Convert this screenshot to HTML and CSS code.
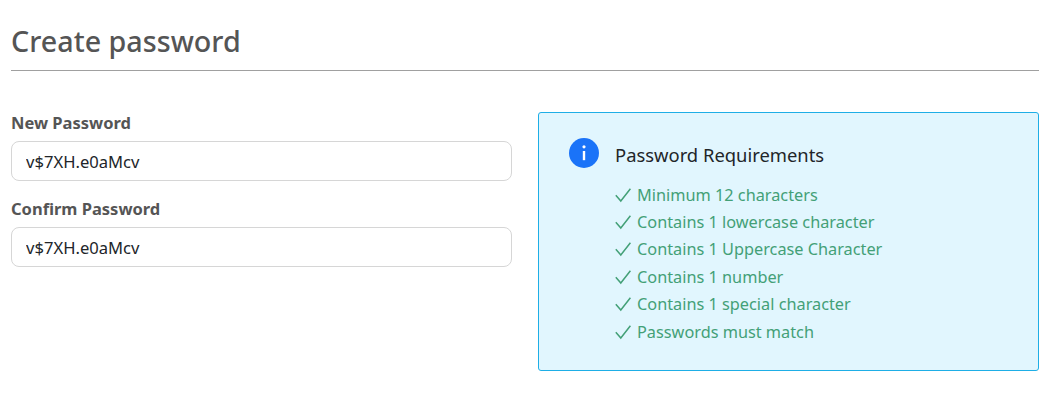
FILE: index.html
```html
<!DOCTYPE html>
<html lang="en">
<head>
<meta charset="utf-8">
<title>Create password</title>
<link rel="stylesheet" href="styles.css">
</head>
<body>
<main class="page">
  <h1 class="title">Create password</h1>
  <div class="columns">
    <form class="fields">
      <label class="label" for="np">New Password</label>
      <input class="input" id="np" type="text" value="v$7XH.e0aMcv">
      <label class="label" for="cp">Confirm Password</label>
      <input class="input" id="cp" type="text" value="v$7XH.e0aMcv">
    </form>
    <section class="req">
      <svg class="info" viewBox="0 0 30 30" width="30" height="30" aria-hidden="true"><circle fill="#1a73f8" cx="15" cy="15" r="15"/><path fill="#fff" d="M13.8 13h2.4v9.2h-2.4z"/><circle fill="#fff" cx="15" cy="8.8" r="1.6"/></svg>
      <div class="req-body">
        <h2 class="req-title">Password Requirements</h2>
        <ul class="list">
          <li class="item"><svg class="check" viewBox="0 0 16 16" width="16" height="16"><path d="M.8 8.2 5.8 14 15.4 1.8"/></svg>Minimum 12 characters</li>
          <li class="item"><svg class="check" viewBox="0 0 16 16" width="16" height="16"><path d="M.8 8.2 5.8 14 15.4 1.8"/></svg>Contains 1 lowercase character</li>
          <li class="item"><svg class="check" viewBox="0 0 16 16" width="16" height="16"><path d="M.8 8.2 5.8 14 15.4 1.8"/></svg>Contains 1 Uppercase Character</li>
          <li class="item"><svg class="check" viewBox="0 0 16 16" width="16" height="16"><path d="M.8 8.2 5.8 14 15.4 1.8"/></svg>Contains 1 number</li>
          <li class="item"><svg class="check" viewBox="0 0 16 16" width="16" height="16"><path d="M.8 8.2 5.8 14 15.4 1.8"/></svg>Contains 1 special character</li>
          <li class="item"><svg class="check" viewBox="0 0 16 16" width="16" height="16"><path d="M.8 8.2 5.8 14 15.4 1.8"/></svg>Passwords must match</li>
        </ul>
      </div>
    </section>
  </div>
</main>
</body>
</html>
```
FILE: styles.css
```css
* { box-sizing: border-box; }
html, body { margin: 0; background: #fff; }
body { font-family: "Noto Sans", "Open Sans", sans-serif; font-size: 16px; color: #212529; }
.page { padding: 0 21px 0 11px; }
.title {
  margin: 0;
  height: 71px;
  padding-top: 20px;
  border-bottom: 1px solid #a0a0a0;
  font-size: 28.7px;
  line-height: 42px;
  font-weight: 500;
  color: #555;
}
.columns { display: flex; gap: 26px; margin-top: 41px; }
.fields { flex: 0 0 501px; display: flex; flex-direction: column; }
.label { font-size: 16.5px; line-height: 22px; font-weight: 700; color: #555; margin: 0 0 7px; }
.input {
  height: 40px;
  padding: 0 14px;
  margin-bottom: 17px;
  border: 1px solid #d6d6d6;
  border-radius: 8px;
  background: #fff;
  font: 400 16.6px "Noto Sans", "Open Sans", sans-serif;
  color: #212529;
}
.req {
  flex: 0 0 501px;
  height: 259px;
  display: flex;
  gap: 16px;
  padding: 25px 30px;
  border: 1px solid #1eaee6;
  border-radius: 3px;
  background: #e1f6fe;
}
.info { flex: none; }
.req-title { margin: 4px 0 14px; font-size: 18.4px; line-height: 25px; font-weight: 400; color: #212529; }
.list { list-style: none; margin: 0; padding: 0; }
.item { display: flex; align-items: center; gap: 6px; height: 27.4px; color: #43a077; font-size: 16.3px; }
.check { flex: none; fill: none; stroke: #43a077; stroke-width: 1.5; }
```
